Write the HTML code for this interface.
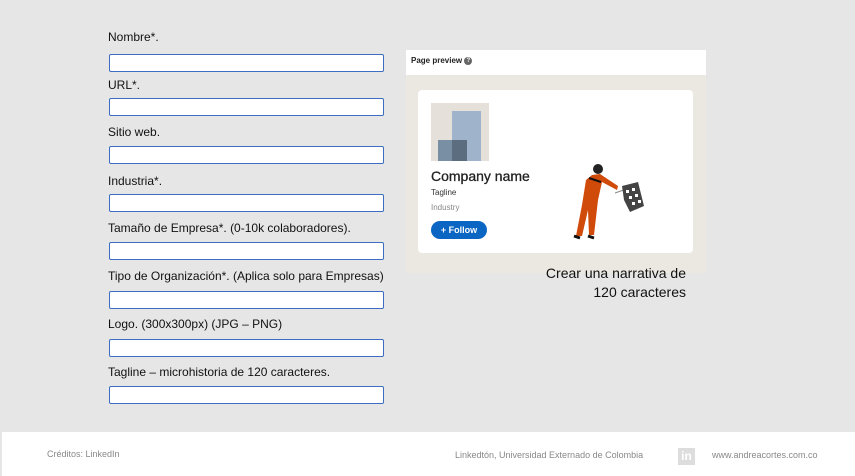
<!DOCTYPE html>
<html><head><style>
body{margin:0;width:855px;height:476px;background:#e6e6e6;position:relative;overflow:hidden;font-family:"Liberation Sans",sans-serif;}
.l{position:absolute;left:108px;font-size:12px;color:#111;}
.i{position:absolute;left:109px;width:273px;height:16px;border:1px solid #3d6cc4;border-radius:2px;background:#fff;}
.a{position:absolute}
</style></head><body>
<div class="l" style="top:30px">Nombre*.</div><div class="i" style="top:54px"></div>
<div class="l" style="top:78px">URL*.</div><div class="i" style="top:98px"></div>
<div class="l" style="top:125px">Sitio web.</div><div class="i" style="top:146px"></div>
<div class="l" style="top:174px">Industria*.</div><div class="i" style="top:194px"></div>
<div class="l" style="top:221px">Tamaño de Empresa*. (0-10k colaboradores).</div><div class="i" style="top:242px"></div>
<div class="l" style="top:269px">Tipo de Organización*. (Aplica solo para Empresas)</div><div class="i" style="top:291px"></div>
<div class="l" style="top:317px">Logo. (300x300px) (JPG – PNG)</div><div class="i" style="top:339px"></div>
<div class="l" style="top:365px">Tagline – microhistoria de 120 caracteres.</div><div class="i" style="top:386px"></div>

<div class="a" style="left:406px;top:50px;width:300px;height:25px;background:#fff"></div>
<div class="a" style="left:411px;top:56px;font-size:8px;font-weight:bold;color:#222">Page preview <span style="display:inline-block;width:8px;height:8px;border-radius:50%;background:#666;color:#fff;font-size:6px;text-align:center;line-height:8px;vertical-align:middle">?</span></div>
<div class="a" style="left:406px;top:75px;width:300px;height:198px;background:#ebe7e1"></div>
<div class="a" style="left:418px;top:90px;width:275px;height:163px;background:#fff;border-radius:4px"></div>
<div class="a" style="left:431px;top:103px;width:58px;height:58px;background:#e5e1da"></div>
<div class="a" style="left:452px;top:111px;width:29px;height:50px;background:#9fb4ca"></div>
<div class="a" style="left:438px;top:140px;width:29px;height:21px;background:#788fa4"></div>
<div class="a" style="left:452px;top:140px;width:15px;height:21px;background:#5c6d80"></div>
<div class="a" style="left:431px;top:168px;font-size:14px;color:#222;-webkit-text-stroke:0.3px #222">Company name</div>
<div class="a" style="left:431px;top:188px;font-size:8px;color:#333">Tagline</div>
<div class="a" style="left:431px;top:203px;font-size:8px;color:#888">Industry</div>
<div class="a" style="left:431px;top:221px;width:56px;height:18px;border-radius:9px;background:#0a66c2;color:#fff;font-size:9px;font-weight:bold;text-align:center;line-height:18px">+ Follow</div>
<svg class="a" style="left:560px;top:160px" width="90" height="85" viewBox="0 0 90 85">
<circle cx="38" cy="9" r="5" fill="#222"/>
<path d="M32 15 L40 14 L58 26 L57 30 L42 22 L38 40 L34 75 L29 75 L28 50 L22 76 L16 76 L22 45 L26 20Z" fill="#d04a0a"/>
<path d="M29 18 L41 22" stroke="#111" stroke-width="2"/>
<path d="M14 76 L20 78 M28 76 L34 78" stroke="#111" stroke-width="3"/>
<path d="M55 33 L78 25" stroke="#888" stroke-width="1"/>
<path d="M62 26 L78 22 L84 46 L70 52 L64 40Z" fill="#444"/>
<path d="M66 30h3v3h-3zM72 28h3v3h-3zM69 36h3v3h-3zM75 34h3v3h-3zM72 42h3v3h-3zM78 40h3v3h-3z" fill="#fff"/>
</svg>
<div class="a" style="left:520px;top:264px;width:166px;text-align:right;font-size:14px;line-height:19px;color:#111">Crear una narrativa de<br>120 caracteres</div>

<div class="a" style="left:2px;top:432px;width:853px;height:44px;background:#fff"></div>
<div class="a" style="left:47px;top:449px;font-size:9px;color:#888">Créditos: LinkedIn</div>
<div class="a" style="left:455px;top:450px;font-size:9px;color:#888">Linkedtón, Universidad Externado de Colombia</div>
<div class="a" style="left:678px;top:448px;width:17px;height:17px;background:#ddd;color:#fff;font-size:12px;font-weight:bold;text-align:center;line-height:17px">in</div>
<div class="a" style="left:712px;top:450px;font-size:9px;color:#888">www.andreacortes.com.co</div>
</body></html>
